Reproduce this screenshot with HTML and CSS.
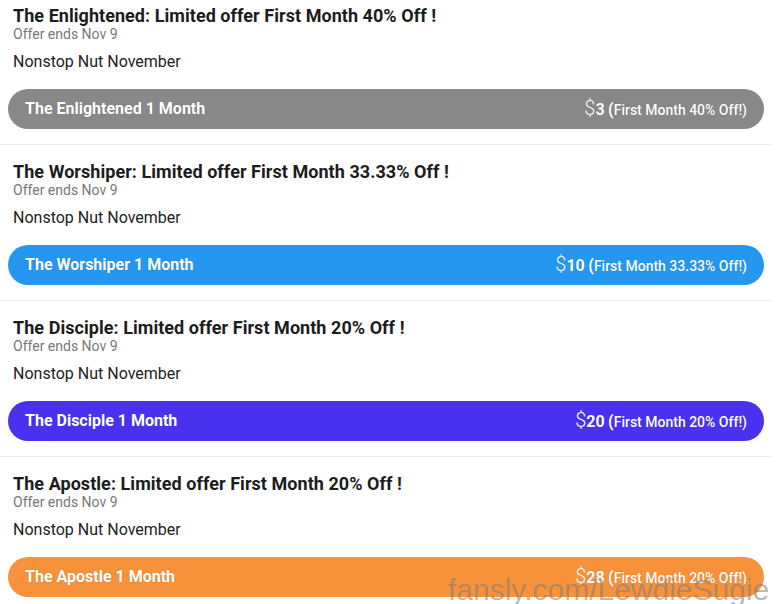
FILE: index.html
```html
<!DOCTYPE html>
<html lang="en">
<head>
<meta charset="utf-8">
<title>Subscription offers</title>
<link rel="stylesheet" href="styles.css">
</head>
<body>
<div class="list">
  <div class="item">
    <div class="title">The Enlightened: Limited offer First Month 40% Off !</div>
    <div class="ends">Offer ends Nov 9</div>
    <div class="desc">Nonstop Nut November</div>
    <div class="btn btn-grey">
      <span class="name">The Enlightened 1 Month</span>
      <span class="price"><span class="cur">$</span><b>3</b> <span class="paren">(</span>First Month 40% Off!)</span>
    </div>
  </div>
  <div class="item">
    <div class="title">The Worshiper: Limited offer First Month 33.33% Off !</div>
    <div class="ends">Offer ends Nov 9</div>
    <div class="desc">Nonstop Nut November</div>
    <div class="btn btn-blue">
      <span class="name">The Worshiper 1 Month</span>
      <span class="price"><span class="cur">$</span><b>10</b> <span class="paren">(</span>First Month 33.33% Off!)</span>
    </div>
  </div>
  <div class="item">
    <div class="title">The Disciple: Limited offer First Month 20% Off !</div>
    <div class="ends">Offer ends Nov 9</div>
    <div class="desc">Nonstop Nut November</div>
    <div class="btn btn-purple">
      <span class="name">The Disciple 1 Month</span>
      <span class="price"><span class="cur">$</span><b>20</b> <span class="paren">(</span>First Month 20% Off!)</span>
    </div>
  </div>
  <div class="item">
    <div class="title">The Apostle: Limited offer First Month 20% Off !</div>
    <div class="ends">Offer ends Nov 9</div>
    <div class="desc">Nonstop Nut November</div>
    <div class="btn btn-orange">
      <span class="name">The Apostle 1 Month</span>
      <span class="price"><span class="cur">$</span><b>28</b> <span class="paren">(</span>First Month 20% Off!)</span>
    </div>
  </div>
</div>
<div class="watermark">fansly.com/LewdieSugie</div>
</body>
</html>
```
FILE: styles.css
```css
html, body {
  margin: 0;
  padding: 0;
  overflow: hidden;
  background: #ffffff;
  width: 780px;
  height: 604px;
}
body {
  font-family: Roboto, "Noto Sans", sans-serif;
  position: relative;
}
.list {
  width: 772px;
}
.item {
  padding: 16px 8px 15px 8px;
  border-bottom: 1px solid #ededed;
}
.item:first-child {
  padding-top: 5px;
}
.title {
  font-size: 18px;
  line-height: 21px;
  font-weight: 700;
  letter-spacing: 0.05px;
  color: #1c1c1c;
  padding-left: 5px;
}
.ends {
  font-size: 14px;
  line-height: 16px;
  color: #777777;
  padding-left: 5px;
}
.desc {
  margin-top: 10px;
  font-size: 16px;
  line-height: 20px;
  color: #222222;
  padding-left: 5px;
}
.btn {
  margin-top: 17px;
  height: 40px;
  border-radius: 20px;
  display: flex;
  align-items: center;
  justify-content: space-between;
  padding: 0 17px;
  color: #ffffff;
  text-shadow: 0 0 1px rgba(0, 0, 0, 0.25);
}
.btn-grey { background: #888888; }
.btn-blue { background: #2597f0; }
.btn-purple { background: #4a31f0; }
.btn-orange { background: #f8923a; }
.name {
  font-size: 16px;
  line-height: 18px;
  font-weight: 700;
}
.price {
  font-size: 14px;
  line-height: 18px;
  font-weight: 500;
}
.price .cur {
  font-size: 20px;
  font-weight: 300;
}
.price b {
  font-size: 16px;
  font-weight: 700;
}
.price .paren {
  font-size: 16px;
  font-weight: 700;
}
.watermark {
  position: absolute;
  left: 448px;
  top: 575px;
  font-family: "Liberation Sans", Arial, sans-serif;
  font-size: 30px;
  line-height: 30px;
  white-space: nowrap;
  color: rgba(125, 125, 125, 0.55);
}
```
